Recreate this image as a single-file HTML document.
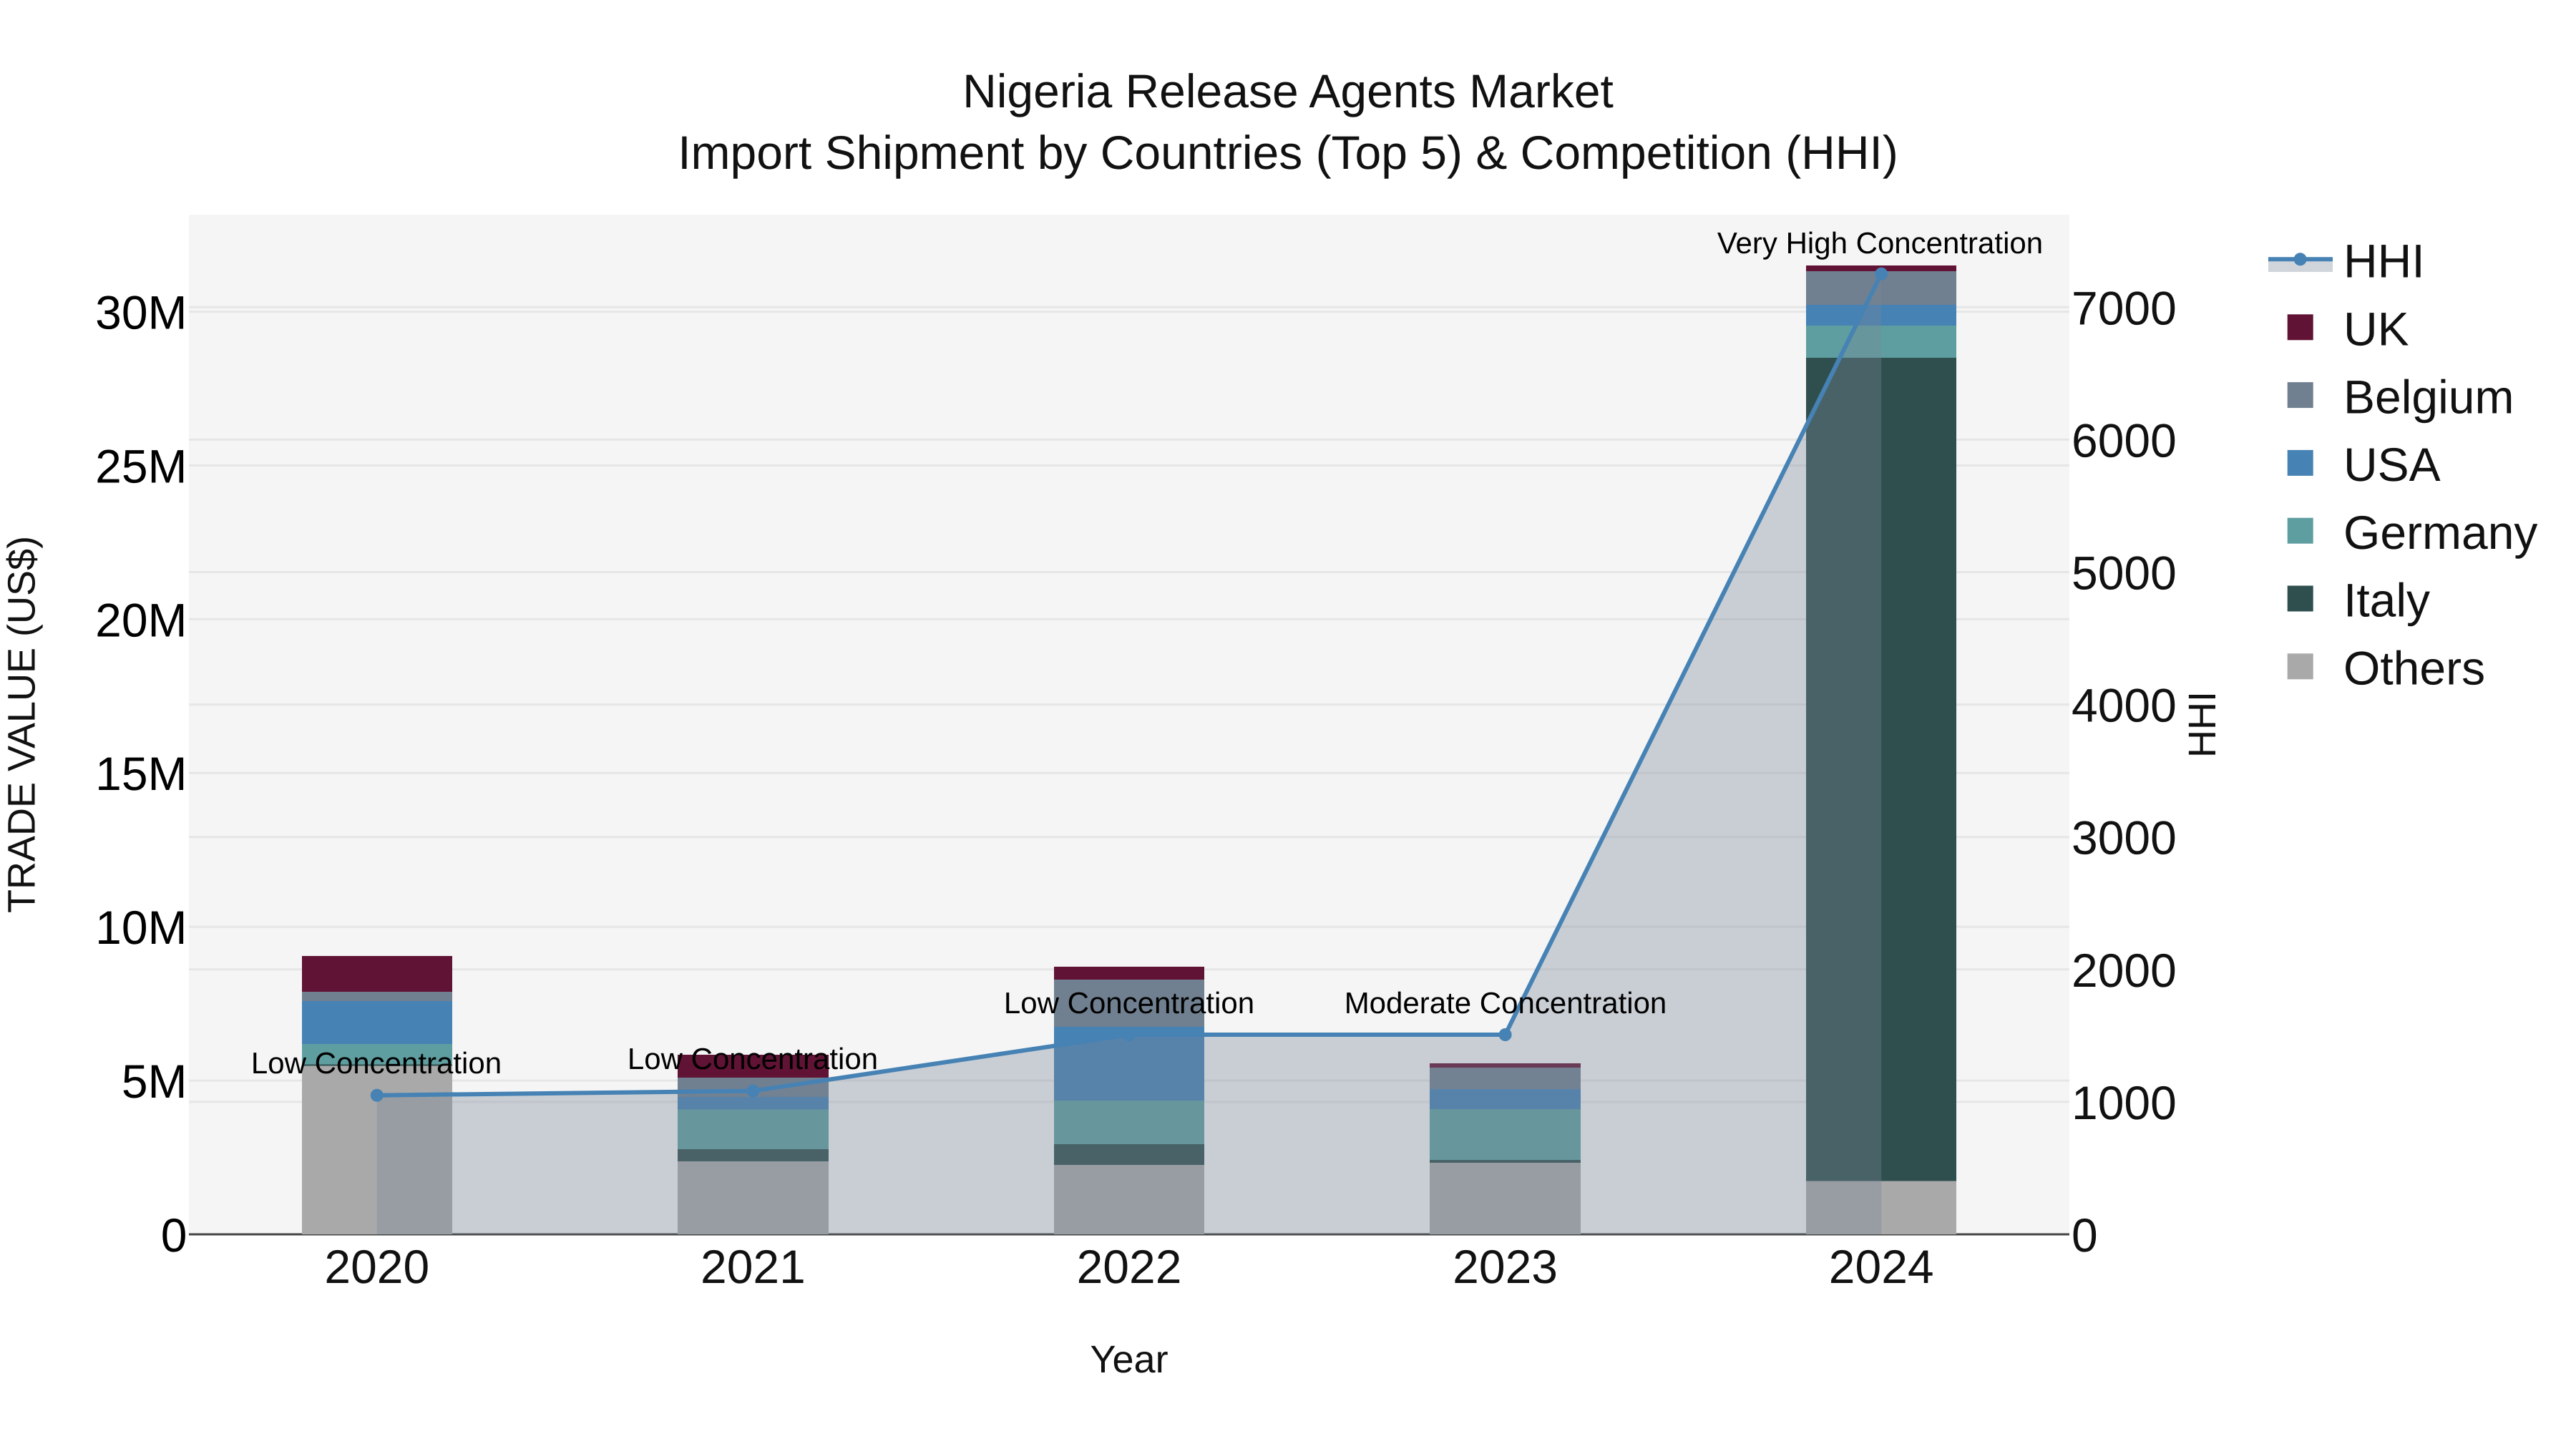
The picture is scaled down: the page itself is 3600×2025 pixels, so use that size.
<!DOCTYPE html>
<html>
<head>
<meta charset="utf-8">
<style>
html,body{margin:0;padding:0;background:#fff;width:3600px;height:2025px;overflow:hidden}
svg{display:block}
text{font-family:"Liberation Sans",Arial,sans-serif;text-rendering:geometricPrecision;fill:#111}
.t{font-size:66px}
.a{font-size:42px;fill:#000;text-anchor:middle}
.at{font-size:54px}
.l{text-anchor:end;fill:#000}
.m{text-anchor:middle}
</style>
</head>
<body>
<svg width="3600" height="2025" viewBox="0 0 3600 2025" xmlns="http://www.w3.org/2000/svg">
<rect width="3600" height="2025" fill="#fff"/>
<rect x="264" y="300" width="2628" height="1425" fill="#f5f5f5"/>
<!-- gridlines -->
<g stroke="#e6e6e6" stroke-width="3" fill="none">
<path d="M264 1510.1H2892M264 1295.2H2892M264 1080.3H2892M264 865.4H2892M264 650.5H2892M264 435.6H2892"/>
<path d="M264 1539.9H2892M264 1354.8H2892M264 1169.7H2892M264 984.6H2892M264 799.5H2892M264 614.4H2892M264 429.3H2892"/>
</g>
<!-- axis line -->
<path d="M264 1725H2892" stroke="#444" stroke-width="3" fill="none"/>
<!-- bars -->
<g shape-rendering="crispEdges">
<rect x="422" y="1489.5" width="210" height="235.5" fill="#a9a9a9"/>
<rect x="422" y="1487.5" width="210" height="2" fill="#2f4f4f"/>
<rect x="422" y="1459" width="210" height="28.5" fill="#5f9ea0"/>
<rect x="422" y="1399" width="210" height="60" fill="#4682b4"/>
<rect x="422" y="1386" width="210" height="13" fill="#708090"/>
<rect x="422" y="1336" width="210" height="50" fill="#611335"/>

<rect x="947" y="1623" width="211" height="102" fill="#a9a9a9"/>
<rect x="947" y="1606" width="211" height="17" fill="#2f4f4f"/>
<rect x="947" y="1550.5" width="211" height="55.5" fill="#5f9ea0"/>
<rect x="947" y="1533" width="211" height="17.5" fill="#4682b4"/>
<rect x="947" y="1506" width="211" height="27" fill="#708090"/>
<rect x="947" y="1474" width="211" height="32" fill="#611335"/>

<rect x="1473" y="1628" width="210" height="97" fill="#a9a9a9"/>
<rect x="1473" y="1599" width="210" height="29" fill="#2f4f4f"/>
<rect x="1473" y="1538" width="210" height="61" fill="#5f9ea0"/>
<rect x="1473" y="1435" width="210" height="103" fill="#4682b4"/>
<rect x="1473" y="1369" width="210" height="66" fill="#708090"/>
<rect x="1473" y="1351" width="210" height="18" fill="#611335"/>

<rect x="1998" y="1625" width="211" height="100" fill="#a9a9a9"/>
<rect x="1998" y="1621" width="211" height="4" fill="#2f4f4f"/>
<rect x="1998" y="1550" width="211" height="71" fill="#5f9ea0"/>
<rect x="1998" y="1522" width="211" height="28" fill="#4682b4"/>
<rect x="1998" y="1492" width="211" height="30" fill="#708090"/>
<rect x="1998" y="1486" width="211" height="6" fill="#611335"/>

<rect x="2524" y="1650.5" width="210" height="74.5" fill="#a9a9a9"/>
<rect x="2524" y="500" width="210" height="1150.5" fill="#2f4f4f"/>
<rect x="2524" y="455" width="210" height="45" fill="#5f9ea0"/>
<rect x="2524" y="426" width="210" height="29" fill="#4682b4"/>
<rect x="2524" y="379" width="210" height="47" fill="#708090"/>
<rect x="2524" y="371" width="210" height="8" fill="#611335"/>
</g>
<!-- HHI area + line -->
<path d="M526.8 1725L526.8 1530.7L1052.4 1524.6L1578 1446L2103.6 1446L2629.2 382.7L2629.2 1725Z" fill="#788798" fill-opacity="0.35"/>
<path d="M526.8 1530.7L1052.4 1524.6L1578 1446L2103.6 1446L2629.2 382.7" fill="none" stroke="#4682b4" stroke-width="6" stroke-linejoin="round"/>
<g fill="#4682b4">
<circle cx="526.8" cy="1530.7" r="9"/>
<circle cx="1052.4" cy="1524.6" r="9"/>
<circle cx="1578" cy="1446" r="9"/>
<circle cx="2103.6" cy="1446" r="9"/>
<circle cx="2629.2" cy="382.7" r="9"/>
</g>
<!-- annotations -->
<text class="a" x="526" y="1500">Low Concentration</text>
<text class="a" x="1052" y="1494">Low Concentration</text>
<text class="a" x="1578" y="1416">Low Concentration</text>
<text class="a" x="2104" y="1416">Moderate Concentration</text>
<text class="a" x="2627.5" y="354">Very High Concentration</text>
<!-- title -->
<text class="t m" x="1800" y="150">Nigeria Release Agents Market</text>
<text class="t m" x="1800" y="236">Import Shipment by Countries (Top 5) &amp; Competition (HHI)</text>
<!-- left ticks -->
<g class="t">
<text class="l t" x="261.5" y="1749">0</text>
<text class="l t" x="261.5" y="1534">5M</text>
<text class="l t" x="261.5" y="1319">10M</text>
<text class="l t" x="261.5" y="1104">15M</text>
<text class="l t" x="261.5" y="889.3">20M</text>
<text class="l t" x="261.5" y="674.5">25M</text>
<text class="l t" x="261.5" y="459.6">30M</text>
</g>
<!-- right ticks -->
<text class="t" x="2895" y="1749">0</text>
<text class="t" x="2895" y="1563.9">1000</text>
<text class="t" x="2895" y="1378.8">2000</text>
<text class="t" x="2895" y="1193.7">3000</text>
<text class="t" x="2895" y="1008.6">4000</text>
<text class="t" x="2895" y="823.5">5000</text>
<text class="t" x="2895" y="638.4">6000</text>
<text class="t" x="2895" y="453.3">7000</text>
<!-- x ticks -->
<text class="t m" x="526.8" y="1793">2020</text>
<text class="t m" x="1052.4" y="1793">2021</text>
<text class="t m" x="1578" y="1793">2022</text>
<text class="t m" x="2103.6" y="1793">2023</text>
<text class="t m" x="2629.2" y="1793">2024</text>
<!-- axis titles -->
<text class="at m" x="1578" y="1918">Year</text>
<text class="at m" transform="translate(48.3 1012.5) rotate(-90)">TRADE VALUE (US$)</text>
<text class="at m" transform="translate(3096 1012.5) rotate(-90)">HHI</text>
<!-- legend -->
<rect x="3170" y="362" width="90" height="18" fill="#788798" fill-opacity="0.35"/>
<path d="M3170 362.3H3260" stroke="#4682b4" stroke-width="6" fill="none"/>
<circle cx="3214.6" cy="362.3" r="9" fill="#4682b4"/>
<rect x="3196.7" y="439.3" width="36" height="36" fill="#611335"/>
<rect x="3196.7" y="534.1" width="36" height="36" fill="#708090"/>
<rect x="3196.7" y="628.9" width="36" height="36" fill="#4682b4"/>
<rect x="3196.7" y="723.7" width="36" height="36" fill="#5f9ea0"/>
<rect x="3196.7" y="818.5" width="36" height="36" fill="#2f4f4f"/>
<rect x="3196.7" y="913.3" width="36" height="36" fill="#a9a9a9"/>
<text class="t" x="3275" y="387.7">HHI</text>
<text class="t" x="3275" y="482.5">UK</text>
<text class="t" x="3275" y="577.3">Belgium</text>
<text class="t" x="3275" y="672.1">USA</text>
<text class="t" x="3275" y="766.9">Germany</text>
<text class="t" x="3275" y="861.7">Italy</text>
<text class="t" x="3275" y="956.5">Others</text>
</svg>
</body>
</html>
